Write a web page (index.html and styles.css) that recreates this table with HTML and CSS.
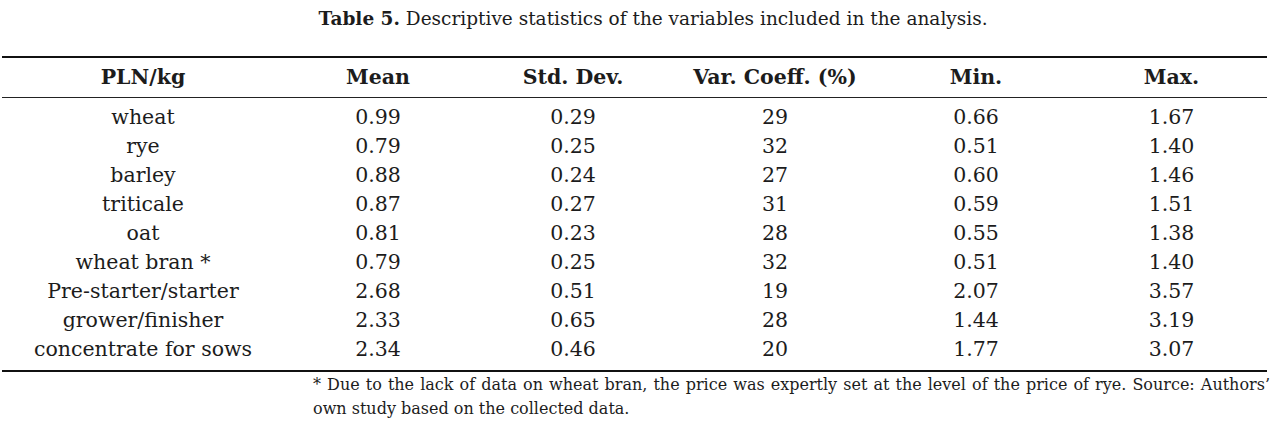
FILE: index.html
```html
<!DOCTYPE html>
<html lang="en">
<head>
<meta charset="utf-8">
<title>Table 5</title>
<link rel="stylesheet" href="styles.css">
</head>
<body>
<div class="page">
  <p class="caption"><b>Table 5.</b> Descriptive statistics of the variables included in the analysis.</p>
  <table class="stats">
    <colgroup>
      <col class="c1"><col class="c2"><col class="c3"><col class="c4"><col class="c5"><col class="c6">
    </colgroup>
    <thead>
      <tr><th>PLN/kg</th><th>Mean</th><th>Std. Dev.</th><th>Var. Coeff. (%)</th><th>Min.</th><th>Max.</th></tr>
    </thead>
    <tbody>
      <tr class="first"><td>wheat</td><td>0.99</td><td>0.29</td><td>29</td><td>0.66</td><td>1.67</td></tr>
      <tr><td>rye</td><td>0.79</td><td>0.25</td><td>32</td><td>0.51</td><td>1.40</td></tr>
      <tr><td>barley</td><td>0.88</td><td>0.24</td><td>27</td><td>0.60</td><td>1.46</td></tr>
      <tr><td>triticale</td><td>0.87</td><td>0.27</td><td>31</td><td>0.59</td><td>1.51</td></tr>
      <tr><td>oat</td><td>0.81</td><td>0.23</td><td>28</td><td>0.55</td><td>1.38</td></tr>
      <tr><td>wheat bran *</td><td>0.79</td><td>0.25</td><td>32</td><td>0.51</td><td>1.40</td></tr>
      <tr><td>Pre-starter/starter</td><td>2.68</td><td>0.51</td><td>19</td><td>2.07</td><td>3.57</td></tr>
      <tr><td>grower/finisher</td><td>2.33</td><td>0.65</td><td>28</td><td>1.44</td><td>3.19</td></tr>
      <tr class="last"><td>concentrate for sows</td><td>2.34</td><td>0.46</td><td>20</td><td>1.77</td><td>3.07</td></tr>
    </tbody>
  </table>
  <p class="note">* Due to the lack of data on wheat bran, the price was expertly set at the level of the price of rye. Source: Authors’ own study based on the collected data.</p>
</div>
</body>
</html>
```

FILE: styles.css
```css
html, body {
  margin: 0;
  padding: 0;
  background: #ffffff;
}

body {
  font-family: "DejaVu Serif", "Liberation Serif", serif;
  color: #1c1c1c;
}

.page {
  width: 1280px;
}

.caption {
  margin: 0;
  height: 56px;
  padding: 7px 0 0 26px;
  box-sizing: border-box;
  text-align: center;
  font-size: 18.5px;
  line-height: 24px;
}

.stats {
  margin-left: 2px;
  width: 1265px;
  border-collapse: collapse;
  table-layout: fixed;
  border-top: 2px solid #111;
  border-bottom: 2px solid #111;
  font-size: 20.5px;
}

.c1 { width: 282px; }
.c2 { width: 188px; }
.c3 { width: 202px; }
.c4 { width: 202px; }
.c5 { width: 200px; }
.c6 { width: 191px; }

.stats th {
  height: 39px;
  padding: 0;
  font-weight: bold;
  text-align: center;
  border-bottom: 1px solid #222;
  line-height: 39px;
}

.stats td {
  padding: 0;
  height: 29px;
  line-height: 29px;
  text-align: center;
}

.stats .first td {
  padding-top: 5px;
}

.stats .last td {
  padding-bottom: 6px;
}

.note {
  margin: 0 0 0 313px;
  width: 957px;
  padding-top: 1px;
  font-size: 16px;
  line-height: 24px;
  text-align: justify;
}
```
